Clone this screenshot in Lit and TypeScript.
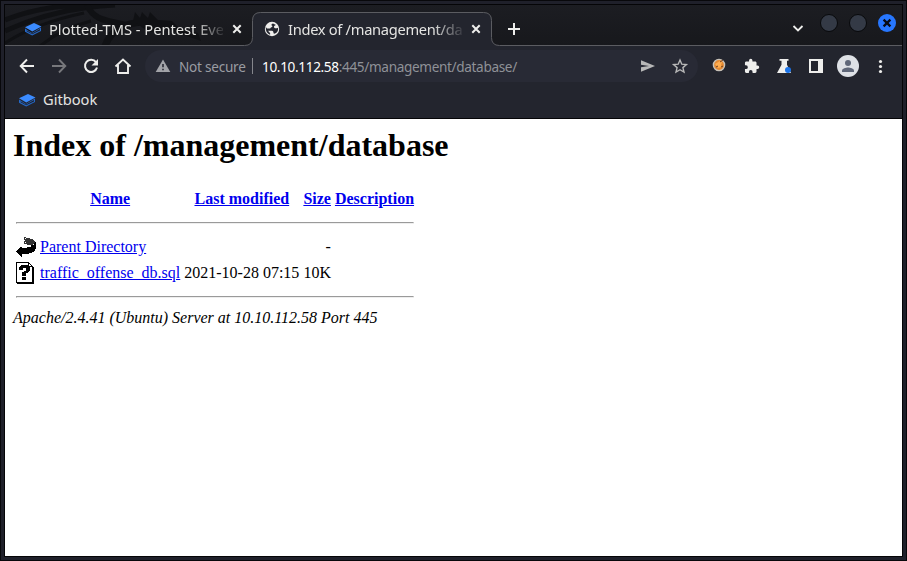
import { LitElement, html, css, svg } from "lit";
import { customElement } from "lit/decorators.js";

const icon = (name: string, body: unknown, box = "0 0 20 20") =>
  html`<svg class="icon ${name}" viewBox=${box}>${body}</svg>`;

const book = svg`
  <path fill="#2468c8" d="M2 9.500 9 14 18 8.500v3.600l-8.800 4.400L2 12.800z"/>
  <path fill="#20222b" d="M3.600 11.300 9 14.400 17 10v1.500l-7.800 3.700-5.600-3z"/>
  <path fill="#3b8bff" d="M2 8.300 11 4l7.500 3.500L9.300 12.500z"/>`;
const close = svg`<path d="M6.300 6.300l7.400 7.400M13.700 6.300l-7.400 7.400" stroke="#eeeeec" stroke-width="2"/>`;

@customElement("tab-strip")
class TabStrip extends LitElement {
  static styles = css`
    :host { display: block; position: relative; height: 41px; background: linear-gradient(#1c1d22, #17181c); color: #e4e4e2; font: 14.67px "Noto Sans", sans-serif; }
    .backdrop { position: absolute; left: 0; top: 0; width: 897px; height: 41px; }
    .row { position: relative; display: flex; height: 41px; }
    .icon { width: 20px; height: 20px; flex: none; overflow: visible; }
    .tab { display: flex; align-items: center; box-sizing: border-box; height: 41px; padding: 8px 4px 1px 18px; }
    .first { width: 246px; }
    .second { width: 239px; padding-left: 11px; }
    .title { width: 176px; margin: 0 4px 0 6px; overflow: hidden; white-space: nowrap; line-height: 22px;
      -webkit-mask-image: linear-gradient(90deg, #000 145px, transparent 178px); }
    .second .title { letter-spacing: -0.3px; }
    .plus { margin: 14px 0 0 14px; }
    .controls { display: flex; margin-left: auto; padding-right: 6px; gap: 11px; }
    .chev { margin: 13px 1px 0 0; }
    .dot { width: 18px; height: 18px; margin-top: 9px; border-radius: 50%; box-sizing: border-box; border: 1px solid #08090b; background: #343a46; }
    .dot.exit { border: 0; background: #2777ff; }
    .dot .icon { width: 18px; height: 18px; display: block; }
  `;
  render() {
    return html`
      <svg class="backdrop" viewBox="0 0 897 41">
        <g fill="none" stroke="#101114">
          <path d="M0 15C25 5 55 0 84 0M0 26C35 10 70 2 110 0" stroke-width="5"/>
          <path d="M0 38C25 22 55 13 79 8M35 41C50 29 70 20 86 16" stroke-width="3"/>
          <path d="M82 0C91 20 110 14 126 22" stroke-width="6"/>
          <path d="M100 41C107 22 125 17 142 17" stroke-width="7"/>
        </g>
        <path fill="#101114" d="M128 16l2-9 5 6 2-6 6 6 2-6 8 8 14 1 8 8 18 4 3 8-20-7-13-5-19 3z"/>
        <path fill="#23252e" stroke="#5b5c61" d="M-2 40.500H239.500Q247.500 40.500 247.500 32.500V15.500Q247.500 7.500 255.500 7.500H478.500Q486.500 7.500 486.500 15.500V32.500Q486.500 40.500 494.500 40.500H900V44H-2z"/>
        <path fill="#23252e" d="M247 40h240v1H247z"/>
      </svg>
      <div class="row">
        <div class="tab first">${icon("", book)}<span class="title">Plotted-TMS - Pentest Everything</span>${icon("", close)}</div>
        <div class="tab second">
          ${icon("", svg`<circle cx="10" cy="10" r="7.200" fill="#eeeeec"/><path fill="#23252e" d="M11 4.500c-2 .5-2 2-.5 2.500 0 1.500-2 1-2.300 2.500H5L3.800 8C3.500 12 5 14.500 8 15.700c1-1.500-1-2.500-2-4h4c2 .5 1 2 2 3 3-.5 4.500-3 4-6-2 1.300-4 .5-4-1 0-1 1-1.200 2-1.700z"/>`)}
          <span class="title">Index of /management/database</span>${icon("", close)}
        </div>
        ${icon("plus", svg`<path d="M10 4v12M4 10h12" stroke="#eeeeec" stroke-width="2"/>`)}
        <div class="controls">
          ${icon("chev", svg`<path d="M5.500 8l4.500 4.500L14.500 8" fill="none" stroke="#eeeeec" stroke-width="1.800"/>`)}
          <span class="dot"></span><span class="dot"></span>
          <span class="dot exit">${icon("", svg`<path d="M5.600 5.600l6.800 6.800M12.400 5.600l-6.800 6.800" stroke="#080b14" stroke-width="2.300"/>`, "0 0 18 18")}</span>
        </div>
      </div>`;
  }
}

@customElement("tool-bar")
class ToolBar extends LitElement {
  static styles = css`
    :host { display: block; background: #23252e; color: #e4e4e2; font: 14.67px "Noto Sans", sans-serif; height: 72px; }
    .icon { width: 20px; height: 20px; flex: none; overflow: visible; }
    .bar { display: flex; align-items: center; gap: 12px; height: 40px; padding: 0 12px; }
    .omni { display: flex; align-items: center; box-sizing: border-box; width: 553px; height: 32px; padding: 0 8px; border-radius: 16px; background: #282a35; font-size: 13.6px; }
    .note { width: 68px; margin-left: 6px; color: #9a9ca2; white-space: nowrap; letter-spacing: -0.25px; }
    .sep { width: 1px; height: 16px; margin: 0 9px 0 5px; background: #85868c; }
    .url { flex: 1; color: #8f9197; white-space: nowrap; letter-spacing: -0.35px; }
    .host { color: #fff; }
    .omni .star { margin-left: 12px; }
    .marks { display: flex; align-items: center; height: 27px; padding-left: 12px; }
    .marks span { margin: 0 0 2px 6px; }
  `;
  render() {
    return html`
      <div class="bar">
        ${icon("", svg`<path d="M17 10H4M10 3.500L3.700 10l6.300 6.500" fill="none" stroke="#eeeeec" stroke-width="1.900"/>`)}
        ${icon("", svg`<path d="M3 10h13M10 3.500l6.300 6.500-6.300 6.500" fill="none" stroke="#77787c" stroke-width="1.900"/>`)}
        ${icon("", svg`<path d="M15 6.200A6.100 6.100 0 1 0 16 11.500" fill="none" stroke="#eeeeec" stroke-width="2"/><path d="M17 3v6.500h-6.500z" fill="#eeeeec"/>`)}
        ${icon("", svg`<path d="M2.500 10.500L10 3.500l7.500 7M5 9v8h10V9" fill="none" stroke="#eeeeec" stroke-width="1.900"/>`)}
        <div class="omni">
          ${icon("", svg`<path fill="#a2a3a8" d="M10 3.500L17.300 16H2.700z"/><path stroke="#282a35" stroke-width="1.600" d="M10 8v3.300M10 12.700v1.600"/>`)}
          <span class="note">Not secure</span><span class="sep"></span>
          <span class="url"><span class="host">10.10.112.58</span>:445/management/database/</span>
          ${icon("", svg`<path fill="#b8b8b8" d="M3 4.200L17 10 3 15.800V11.300L11 10 3 8.700z"/>`)}
          ${icon("star", svg`<path fill="none" stroke="#b8b8b8" stroke-width="1.400" d="M10 4l1.800 4.200 4.600.4-3.500 3 1.100 4.500-4-2.400-4 2.400 1.100-4.500-3.500-3 4.600-.4z"/>`)}
        </div>
        ${icon("", svg`<circle cx="9" cy="9" r="5.600" fill="#e58a32" stroke="#c8c2b8" stroke-width="1.400"/><path fill="#ffad4f" d="M5 8l5-3 2 1-1 3 1 2-4 1z"/><path d="M6 11l2-1M10 6l3-2M11 11l2-1" stroke="#713f1e"/>`)}
        ${icon("", svg`<path transform="translate(1.600 2) scale(.68)" fill="#eeeeec" d="M20.500 11H19V7c0-1.100-.9-2-2-2h-4V3.500a2.500 2.500 0 0 0-5 0V5H4c-1.100 0-2 .9-2 2v3.800h1.500a2.700 2.700 0 0 1 0 5.400H2V20c0 1.100.9 2 2 2h3.800v-1.500a2.700 2.700 0 0 1 5.400 0V22H17c1.100 0 2-.9 2-2v-4h1.500a2.500 2.500 0 0 0 0-5z"/>`)}
        ${icon("", svg`<path fill="#eeeeec" d="M5.500 3h9v1.800H13v4l4 8.200H3l4.500-8.200v-4h-2z"/><circle cx="14" cy="14" r="3" fill="#1a73e8"/>`)}
        ${icon("", svg`<path fill="#eeeeec" fill-rule="evenodd" d="M3 3h14v14H3zM5 5v10h7V5z"/>`)}
        ${icon("", svg`<circle cx="10" cy="10" r="11" fill="#dee1e6"/><circle cx="10" cy="7" r="3" fill="#5f6779"/><path fill="#5f6779" d="M4 16v-1.500c0-2 4-3 6-3s6 1 6 3V16z"/>`)}
        ${icon("", svg`<circle cx="10.500" cy="5.500" r="1.600" fill="#eeeeec"/><circle cx="10.500" cy="10.500" r="1.600" fill="#eeeeec"/><circle cx="10.500" cy="15.500" r="1.600" fill="#eeeeec"/>`)}
      </div>
      <div class="marks">${icon("", book)}<span>Gitbook</span></div>`;
  }
}

@customElement("directory-page")
class DirectoryPage extends LitElement {
  static styles = css`
    :host { display: block; background: #fff; color: #000; padding: 8px; font: 16px/18px "Liberation Serif", serif; }
    h1 { margin: 0 0 21px; font-size: 32px; line-height: 37px; }
    a { color: #0000ee; text-decoration: underline; }
    table { border-spacing: 2px; border-collapse: separate; }
    td, th { padding: 1px; white-space: nowrap; }
    .right { text-align: right; }
    hr { margin: 8px 0; }
    .glyph { display: block; width: 20px; height: 22px; }
    address { font-style: italic; }
  `;
  render() {
    return html`
      <h1>Index of /management/database</h1>
      <table>
        <tr><th><span class="glyph"></span></th><th><a>Name</a></th><th><a>Last modified</a></th><th><a>Size</a></th><th><a>Description</a></th></tr>
        <tr><th colspan="5"><hr></th></tr>
        <tr>
          <td><svg class="glyph" viewBox="0 0 20 22" shape-rendering="crispEdges">
            <path fill="#333" d="M8 1h2v1h4v1h3v1h1v1h1v3h-2v1h-6V8H8z"/>
            <path fill="#fff" d="M9 2h1v1H9zM8 4h1v1H8zM9 6h1v1H9z"/>
            <path d="M18 7h1V6h1v7h-1v2h-1v1h-2v1h-3v1H6v3H5v-1H4v-1H3v-1H2v-1H1v-1H0v-1h1v-1h1v-1h1v-1h1v-1h2v1h5v-1h4V9h3z"/></svg></td>
          <td><a>Parent Directory</a></td><td></td><td class="right">- </td><td></td>
        </tr>
        <tr>
          <td><svg class="glyph" viewBox="0 0 20 22" shape-rendering="crispEdges">
            <path fill="#fff" stroke="#000" d="M.5.500h12l4 4v16H.5z"/>
            <path d="M12 0h1v4h4v1h-5zM17 5h1v17H1v-1h16z"/>
            <path d="M5 3h7v1h1v1h1v4h-1v1h-1v1h-2v3H6v-4h2V9h2V6H7v2H3V5h1V4h1zM6 15h4v3H6z"/></svg></td>
          <td><a>traffic_offense_db.sql</a></td><td class="right">2021-10-28 07:15</td><td class="right">10K</td><td></td>
        </tr>
        <tr><th colspan="5"><hr></th></tr>
      </table>
      <address>Apache/2.4.41 (Ubuntu) Server at 10.10.112.58 Port 445</address>`;
  }
}

@customElement("app-root")
class AppRoot extends LitElement {
  static styles = css`
    :host { display: block; box-sizing: border-box; width: 907px; height: 561px; overflow: hidden; background: #1f202a; border: 1px solid #08080b; padding: 3px; }
    .window { display: flex; flex-direction: column; box-sizing: border-box; height: 553px; border: 1px solid #050507; }
    directory-page { flex: 1; border-top: 1px solid #050507; }
  `;
  render() {
    return html`<div class="window"><tab-strip></tab-strip><tool-bar></tool-bar><directory-page></directory-page></div>`;
  }
}
